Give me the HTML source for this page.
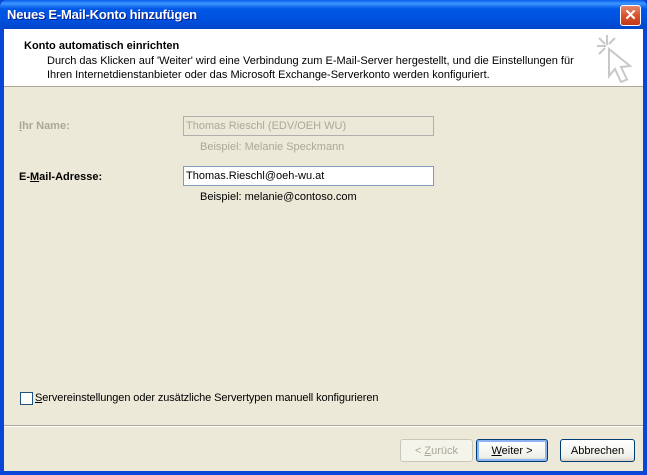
<!DOCTYPE html>
<html><head><meta charset="utf-8"><style>
*{margin:0;padding:0;box-sizing:border-box}
body{width:647px;height:475px;overflow:hidden;background:#0846D8;font-family:Tahoma,"Liberation Sans",sans-serif;font-size:11px;color:#000;position:relative}
.title{position:absolute;left:0;top:0;width:647px;height:29px;background:linear-gradient(#0A5FEC 0%,#3D95FF 12%,#0058E6 30%,#0050DE 70%,#0046C8 100%);border-radius:7px 7px 0 0}
.title span{position:absolute;left:7px;top:7px;color:#fff;font-weight:bold;font-size:13px;text-shadow:1px 1px #0A1E8C;letter-spacing:-0.2px}
.close{position:absolute;left:620px;top:5px;width:21px;height:21px;border:1px solid #fff;border-radius:3px;background:linear-gradient(#E6886A,#D8532E 50%,#C2381A);color:#fff;font-weight:bold;font-size:15px;text-align:center;line-height:19px}
.client{position:absolute;left:4px;top:29px;width:639px;height:442px;background:#ECE9D8}
.hdr{position:absolute;left:0;top:0;width:639px;height:58px;background:#fff;border-bottom:1px solid #ACA899}
.abs{position:absolute;white-space:nowrap}
.inp{position:absolute;left:179px;width:251px;height:20px;border:1px solid #7F9DB9;padding:3px 2px 0;background:#fff}
.btn{position:absolute;top:410px;height:23px;border:1px solid #003C74;border-radius:3px;background:linear-gradient(#fff,#F0F0EA 80%,#D6D0C5);text-align:center;line-height:22px}
</style></head><body>
<div class="title"><span>Neues E-Mail-Konto hinzufügen</span><div class="close">✕</div></div>
<div class="client">
 <div class="hdr">
  <div class="abs" style="left:20px;top:11px;font-weight:bold">Konto automatisch einrichten</div>
  <div class="abs" style="left:43px;top:26px">Durch das Klicken auf 'Weiter' wird eine Verbindung zum E-Mail-Server hergestellt, und die Einstellungen für</div>
  <div class="abs" style="left:43px;top:40px">Ihren Internetdienstanbieter oder das Microsoft Exchange-Serverkonto werden konfiguriert.</div>
  <svg class="abs" style="left:590px;top:5px" width="40" height="52" viewBox="0 0 40 52"><g stroke="#C8C8C8" stroke-width="2" fill="none"><path d="M13 1v10M3 12h9M5 4l6 6M21 4l-6 6M5 20l6-6"/><path d="M15 15l0 27 6-7 6 13 6-2.5-6-12.5 9-1z" fill="#fff"/></g></svg>
 </div>
 <div class="abs" style="left:15px;top:91px;font-weight:bold;color:#ACA899"><u>I</u>hr Name:</div>
 <div class="inp" style="top:87px;background:#ECE9D8;color:#ACA899;border-color:#AFAFAF">Thomas Rieschl (EDV/OEH WU)</div>
 <div class="abs" style="left:196px;top:112px;color:#ACA899">Beispiel: Melanie Speckmann</div>
 <div class="abs" style="left:15px;top:142px;font-weight:bold">E-<u>M</u>ail-Adresse:</div>
 <div class="inp" style="top:137px">Thomas.Rieschl@oeh-wu.at</div>
 <div class="abs" style="left:196px;top:162px">Beispiel: melanie@contoso.com</div>
 <div class="abs" style="left:16px;top:363px;width:13px;height:13px;border:1px solid #1C5180;background:#fff"></div>
 <div class="abs" style="left:31px;top:363px;letter-spacing:-0.1px"><u>S</u>ervereinstellungen oder zusätzliche Servertypen manuell konfigurieren</div>
 <div class="abs" style="left:0;top:396px;width:639px;border-top:1px solid #ACA899;border-bottom:1px solid #fff"></div>
 <div class="btn" style="left:396px;width:73px;border-color:#C9C7BA;color:#ACA899;background:#F5F4EA">&lt; <u>Z</u>urück</div>
 <div class="btn" style="left:472px;width:72px;box-shadow:inset 0 0 0 2px #8CB4F2"><u>W</u>eiter &gt;</div>
 <div class="btn" style="left:556px;width:75px">Abbrechen</div>
</div>
</body></html>
